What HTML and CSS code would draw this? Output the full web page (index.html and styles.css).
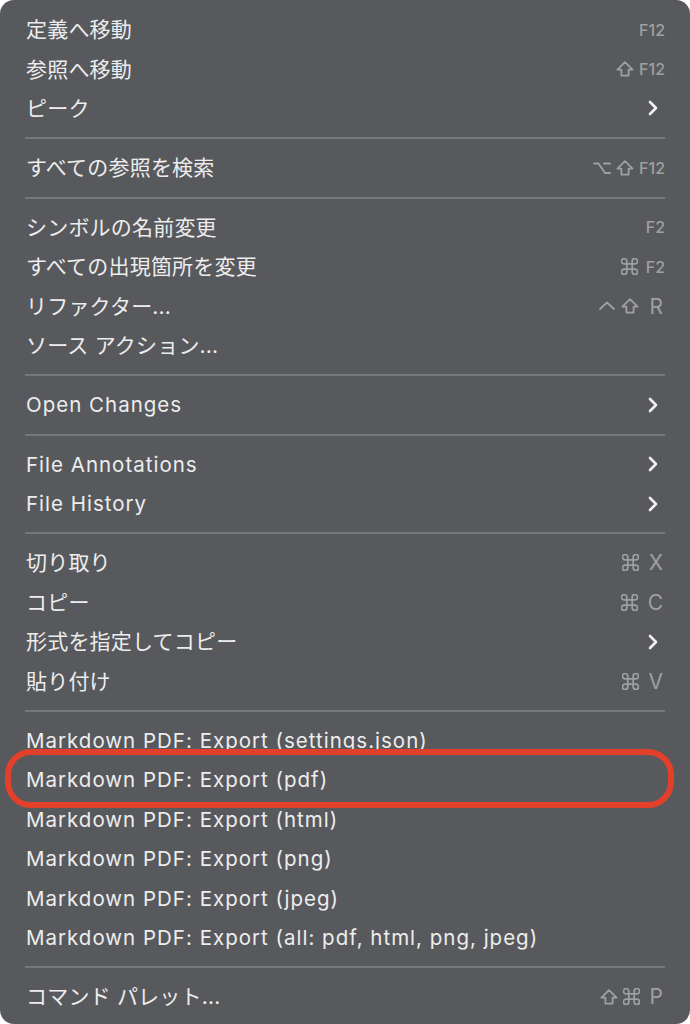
FILE: index.html
```html
<!DOCTYPE html>
<html lang="ja">
<head>
<meta charset="utf-8">
<link rel="stylesheet" href="styles.css">
</head>
<body>
<svg class="defs" width="0" height="0" aria-hidden="true">
  <defs>
    <symbol id="shift" viewBox="0 0 18 16"><path d="M9 1.2 L16.6 8.6 H12.6 V14.6 H5.4 V8.6 H1.4 Z"/></symbol>
    <symbol id="cmd" viewBox="2.5 2.5 19 19"><path d="M15 6v12a3 3 0 1 0 3-3H6a3 3 0 1 0 3 3V6a3 3 0 1 0-3 3h12a3 3 0 1 0-3-3"/></symbol>
    <symbol id="opt" viewBox="0 0 18 16"><path d="M1 3.5 H5.5 L12 13 H17 M11 3.5 H17"/></symbol>
    <symbol id="ctrl" viewBox="0 0 18 16"><path d="M2 11 L9 4.5 L16 11"/></symbol>
    <symbol id="chev" viewBox="0 0 10 16"><polyline points="2,2 8,8 2,14"/></symbol>
  </defs>
</svg>
<div class="menu">
  <div class="row"><span class="label">定義へ移動</span><span class="key"><span class="fk">F12</span></span></div>
  <div class="row"><span class="label">参照へ移動</span><span class="key"><svg class="sym"><use href="#shift"/></svg><span class="fk">F12</span></span></div>
  <div class="row"><span class="label">ピーク</span><svg class="chev"><use href="#chev"/></svg></div>
  <div class="sep"></div>
  <div class="row"><span class="label">すべての参照を検索</span><span class="key"><svg class="sym"><use href="#opt"/></svg><svg class="sym"><use href="#shift"/></svg><span class="fk">F12</span></span></div>
  <div class="sep"></div>
  <div class="row"><span class="label">シンボルの名前変更</span><span class="key"><span class="fk">F2</span></span></div>
  <div class="row"><span class="label">すべての出現箇所を変更</span><span class="key"><svg class="sym cmd"><use href="#cmd"/></svg><span class="fk wide">F2</span></span></div>
  <div class="row"><span class="label">リファクター...</span><span class="key"><svg class="sym"><use href="#ctrl"/></svg><svg class="sym"><use href="#shift"/></svg><span class="lk">R</span></span></div>
  <div class="row"><span class="label">ソース アクション...</span></div>
  <div class="sep"></div>
  <div class="row"><span class="label en">Open Changes</span><svg class="chev"><use href="#chev"/></svg></div>
  <div class="sep"></div>
  <div class="row"><span class="label en">File Annotations</span><svg class="chev"><use href="#chev"/></svg></div>
  <div class="row"><span class="label en">File History</span><svg class="chev"><use href="#chev"/></svg></div>
  <div class="sep"></div>
  <div class="row"><span class="label">切り取り</span><span class="key"><svg class="sym cmd"><use href="#cmd"/></svg><span class="lk">X</span></span></div>
  <div class="row"><span class="label">コピー</span><span class="key"><svg class="sym cmd"><use href="#cmd"/></svg><span class="lk">C</span></span></div>
  <div class="row"><span class="label">形式を指定してコピー</span><svg class="chev"><use href="#chev"/></svg></div>
  <div class="row"><span class="label">貼り付け</span><span class="key"><svg class="sym cmd"><use href="#cmd"/></svg><span class="lk">V</span></span></div>
  <div class="sep"></div>
  <div class="row"><span class="label en">Markdown PDF: Export (settings.json)</span></div>
  <div class="row"><span class="label en">Markdown PDF: Export (pdf)</span><span class="ring"></span></div>
  <div class="row"><span class="label en">Markdown PDF: Export (html)</span></div>
  <div class="row"><span class="label en">Markdown PDF: Export (png)</span></div>
  <div class="row"><span class="label en">Markdown PDF: Export (jpeg)</span></div>
  <div class="row"><span class="label en">Markdown PDF: Export (all: pdf, html, png, jpeg)</span></div>
  <div class="sep"></div>
  <div class="row"><span class="label">コマンド パレット...</span><span class="key"><svg class="sym"><use href="#shift"/></svg><svg class="sym cmd"><use href="#cmd"/></svg><span class="lk">P</span></span></div>
</div>
</body>
</html>
```
FILE: styles.css
```css
html, body {
  margin: 0;
  padding: 0;
  background: #ffffff;
}
.defs {
  position: absolute;
  width: 0;
  height: 0;
  overflow: hidden;
}
.menu {
  width: 690px;
  height: 1024px;
  box-sizing: border-box;
  background: #58595d;
  border-radius: 14px;
  padding-top: 10px;
  display: flex;
  flex-direction: column;
  font-family: Inter, "Noto Sans CJK JP", sans-serif;
  color: #ededed;
}
.row {
  position: relative;
  height: 39.4px;
  flex: none;
  display: flex;
  align-items: center;
  justify-content: space-between;
  padding: 0 25px 0 26px;
}
.label {
  font-size: 21px;
  letter-spacing: 0.2px;
  white-space: nowrap;
  margin-top: -3px;
}
.label.en {
  font-size: 20.5px;
  letter-spacing: 1px;
  margin-top: 0;
}
.key {
  display: flex;
  align-items: center;
  gap: 5px;
  color: #9fa0a3;
}
.fk {
  font-size: 16px;
  font-weight: 500;
}
.fk.wide {
  margin-left: 3px;
}
.lk {
  font-size: 21px;
  margin-left: 5px;
  margin-right: 2px;
}
.sym {
  width: 18px;
  height: 16px;
  fill: none;
  stroke: #9fa0a3;
  stroke-width: 1.8;
  stroke-linejoin: round;
  stroke-linecap: round;
}
.sym.cmd {
  width: 17px;
  height: 17px;
  stroke-width: 1.9;
}
.chev {
  width: 10px;
  height: 16px;
  margin-right: 7px;
  fill: none;
  stroke: #f2f2f2;
  stroke-width: 2.6;
  stroke-linecap: round;
  stroke-linejoin: round;
}
.sep {
  flex: none;
  height: 2px;
  margin: 9px 25px 9px 25px;
  background: #76777a;
}
.ring {
  position: absolute;
  left: 5px;
  right: 16px;
  top: -11px;
  bottom: -8px;
  border: 6px solid #e2402b;
  border-radius: 26px;
}
```
